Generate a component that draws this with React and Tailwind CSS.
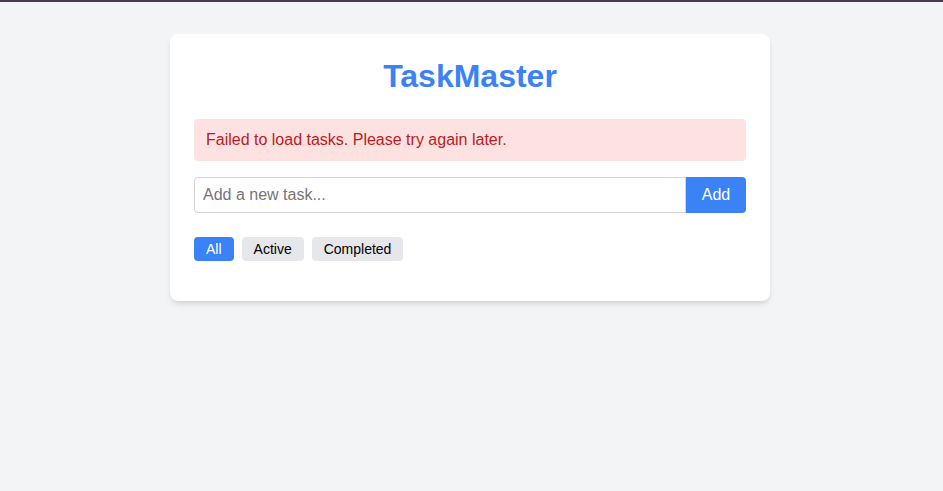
export default function App() {
  return (
    <div className="min-h-[491px] bg-[#f3f4f6] border-t-2 border-[#4a3a4f] pt-8 pr-[3px]" style={{ fontFamily: '"Liberation Sans", Arial, sans-serif' }}>
      <div className="mx-auto w-[600px] bg-white rounded-lg shadow-md p-6">
        <h1 className="text-[32px] leading-[37px] font-bold text-[#3b82f6] text-center mb-6">TaskMaster</h1>
        <div className="bg-[#fee2e2] text-[#b91c1c] rounded px-3 py-[9px] leading-6 mb-4">Failed to load tasks. Please try again later.</div>
        <div className="flex mb-6">
          <input className="flex-1 h-9 border border-[#d1d5db] rounded-l px-2 text-base placeholder-[#757575] outline-none" placeholder="Add a new task..." />
          <button className="w-[60px] h-9 bg-[#3b82f6] text-white rounded-r text-base">Add</button>
        </div>
        <div className="flex gap-2">
          <button className="px-3 h-6 text-sm rounded bg-[#3b82f6] text-white">All</button>
          <button className="px-3 h-6 text-sm rounded bg-[#e5e7eb] text-black">Active</button>
          <button className="px-3 h-6 text-sm rounded bg-[#e5e7eb] text-black">Completed</button>
        </div>
        <ul className="mt-4"></ul>
      </div>
    </div>
  );
}
